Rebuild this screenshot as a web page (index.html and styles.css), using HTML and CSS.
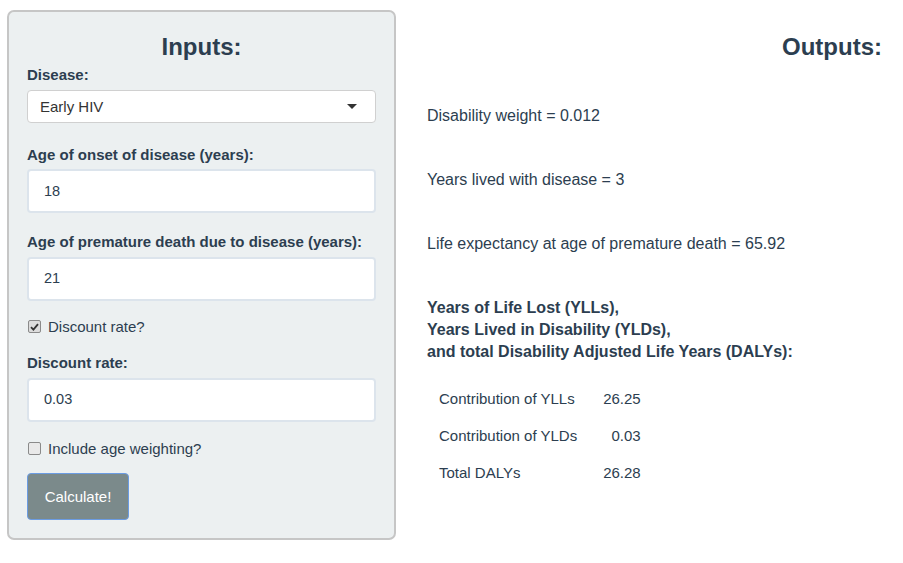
FILE: index.html
```html
<!DOCTYPE html>
<html>
<head>
<meta charset="utf-8">
<link rel="stylesheet" href="styles.css">
</head>
<body>
<div class="page">
  <aside class="well">
    <h3 class="title">Inputs:</h3>
    <label class="lbl lbl-first">Disease:</label>
    <div class="select">
      <span>Early HIV</span>
      <span class="caret"></span>
    </div>
    <label class="lbl lbl-gap21">Age of onset of disease (years):</label>
    <div class="input">18</div>
    <label class="lbl lbl-gap18">Age of premature death due to disease (years):</label>
    <div class="input">21</div>
    <div class="check check-1">
      <span class="box checked"><svg width="9" height="8" viewBox="0 0 9 8"><path d="M1 4.2 L3.4 6.6 L8 1.2" fill="none" stroke="#333" stroke-width="1.8"/></svg></span>
      <span>Discount rate?</span>
    </div>
    <label class="lbl lbl-gap15">Discount rate:</label>
    <div class="input">0.03</div>
    <div class="check check-2">
      <span class="box"></span>
      <span>Include age weighting?</span>
    </div>
    <button class="btn">Calculate!</button>
  </aside>
  <main class="main">
    <h3 class="title right">Outputs:</h3>
    <p class="out out-1">Disability weight = 0.012</p>
    <p class="out">Years lived with disease = 3</p>
    <p class="out">Life expectancy at age of premature death = 65.92</p>
    <p class="bold">Years of Life Lost (YLLs),<br>Years Lived in Disability (YLDs),<br>and total Disability Adjusted Life Years (DALYs):</p>
    <table class="tbl">
      <tr><td>Contribution of YLLs</td><td class="num">26.25</td></tr>
      <tr><td>Contribution of YLDs</td><td class="num">0.03</td></tr>
      <tr><td>Total DALYs</td><td class="num">26.28</td></tr>
    </table>
  </main>
</div>
</body>
</html>
```

FILE: styles.css
```css
* { box-sizing: border-box; }
html, body { margin: 0; padding: 0; background: #fff; }
body {
  font-family: "Liberation Sans", Arial, sans-serif;
  font-size: 15px;
  line-height: 21.4px;
  color: #2c3e50;
}
.page {
  display: flex;
  align-items: flex-start;
  padding: 10px 0 0 7px;
}
.well {
  width: 389px;
  background: #ecf0f1;
  border: 2px solid #c6c6c6;
  border-radius: 7px;
  padding: 21px 18px 18px 18px;
  display: flex;
  flex-direction: column;
  align-items: stretch;
}
.title {
  margin: 0;
  font-size: 24px;
  line-height: 28.6px;
  font-weight: bold;
  text-align: center;
}
.title.right { text-align: right; }
.lbl {
  display: block;
  font-weight: bold;
  font-size: 15px;
  margin-bottom: 4px;
}
.lbl-first { margin-top: 2px; margin-bottom: 5px; }
.lbl-gap21 { margin-top: 21px; }
.lbl-gap18 { margin-top: 18px; }
.lbl-gap15 { margin-top: 15px; }
.select {
  height: 33px;
  background: #fff;
  border: 1px solid #d0d0d0;
  border-radius: 4px;
  display: flex;
  align-items: center;
  justify-content: space-between;
  padding: 0 18px 0 12px;
  color: #333;
  font-size: 15px;
}
.caret {
  width: 0; height: 0;
  border-left: 5px solid transparent;
  border-right: 5px solid transparent;
  border-top: 5px solid #333;
}
.input {
  height: 44px;
  background: #fff;
  border: 2px solid #dce4ec;
  border-radius: 4px;
  padding: 0 15px;
  display: flex;
  align-items: center;
  font-size: 14.5px;
  color: #2c3e50;
}
.check {
  display: flex;
  align-items: center;
  gap: 7px;
  padding-left: 1px;
  font-size: 15px;
  color: #2c3e50;
}
.check-1 { margin-top: 15px; }
.check-2 { margin-top: 16px; }
.box {
  width: 13px; height: 13px;
  border: 1px solid #8a8a8a;
  border-radius: 2px;
  background: #e9e9e9;
  display: flex;
  align-items: center;
  justify-content: center;
}
.box.checked { background: #dcdcdc; }
.btn {
  align-self: flex-start;
  margin-top: 14px;
  height: 47px;
  width: 102px;
  background: #7b8a8b;
  border: 1px solid #6b9ce3;
  border-radius: 4px;
  color: #fff;
  font-family: "Liberation Sans", Arial, sans-serif;
  font-size: 15px;
  padding: 0;
}
.main {
  flex: 1;
  padding: 23px 21px 0 31px;
}
.out {
  margin: 0 0 42.6px 0;
  font-size: 16px;
}
.out-1 { margin-top: 43px; }
.bold {
  margin: 0;
  margin-top: 10px;
  font-size: 16px;
  font-weight: bold;
  line-height: 22px;
}
.tbl {
  border-collapse: collapse;
  margin-top: 17px;
}
.tbl td {
  padding: 8px 12px;
  font-size: 15px;
  line-height: 21px;
}
.tbl td.num { text-align: right; padding-left: 14px; }
```
